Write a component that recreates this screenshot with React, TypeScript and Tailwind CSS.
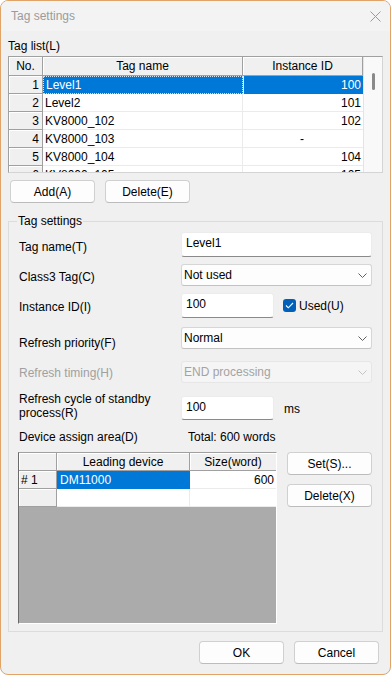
import React from "react";

const font = { fontFamily: '"Liberation Sans", Arial, sans-serif' };

function Btn({ children, className = "" }: { children: React.ReactNode; className?: string }) {
  return (
    <div
      className={
        "flex items-center justify-center h-[23px] w-[85px] bg-[#fdfdfd] border border-[#d0d0d0] border-b-[#bcbcbc] rounded-[4px] text-[12px] leading-[14px] text-black " +
        className
      }
    >
      {children}
    </div>
  );
}

function Chevron({ color = "#5f5f5f" }: { color?: string }) {
  return (
    <svg width="9" height="5" viewBox="0 0 9 5" className="shrink-0">
      <path d="M0.5 0.5 L4.5 4.5 L8.5 0.5" fill="none" stroke={color} strokeWidth="1" />
    </svg>
  );
}

function Select({ value, disabled = false }: { value: string; disabled?: boolean }) {
  return (
    <div
      className={
        "flex items-center justify-between h-[22px] w-[191px] pl-[2px] pr-[4px] rounded-[3px] border text-[12px] leading-[14px] " +
        (disabled
          ? "bg-[#f5f5f5] border-[#e6e6e6] text-[#a3a3a3]"
          : "bg-[#fdfdfd] border-[#d6d6d6] border-b-[#c2c2c2] text-black")
      }
    >
      <span>{value}</span>
      <Chevron color={disabled ? "#c4c4c4" : "#5f5f5f"} />
    </div>
  );
}

function Input({ value, w, h = 25 }: { value: string; w: string; h?: number }) {
  return (
    <div
      className={
        "flex items-start pl-[4px] pt-[3px] bg-white border border-[#ececec] border-b-[#8a8a8a] rounded-[3px] text-[12px] leading-[14px] text-black " +
        w +
        (h === 25 ? " h-[25px]" : " h-[24px]")
      }
    >
      {value}
    </div>
  );
}

const rows = [
  ["1", "Level1", "100"],
  ["2", "Level2", "101"],
  ["3", "KV8000_102", "102"],
  ["4", "KV8000_103", "-"],
  ["5", "KV8000_104", "104"],
  ["6", "KV8000_105", "105"],
];

export default function App() {
  return (
    <div className="w-[391px] h-[675px] bg-white" style={font}>
      <div className="w-[391px] h-[675px] flex flex-col bg-[#f0f0f0] border border-[#e0a468] rounded-[8px] overflow-hidden">
        {/* Title bar */}
        <div className="h-[30px] shrink-0 flex items-center justify-between bg-[#f3f3f3] pl-[10px] pr-[9px]">
          <span className="text-[12px] text-[#9b9b9b] leading-[14px]">Tag settings</span>
          <svg width="11" height="11" viewBox="0 0 11 11">
            <path d="M0.5 0.5 L10.5 10.5 M10.5 0.5 L0.5 10.5" stroke="#9a9a9a" strokeWidth="1" />
          </svg>
        </div>

        {/* Body */}
        <div className="flex flex-col px-[7px] text-[12px] leading-[14px] text-black">
          <div className="mt-[8px] h-[14px]">Tag list(L)</div>

          {/* Tag list table */}
          <div className="mt-[3px] h-[117px] w-[375px] flex border border-[#a0a0a0] border-r-[#d4d4d4] border-b-[#d4d4d4] bg-white overflow-hidden">
            <div className="w-[354px] flex flex-col">
              <div className="flex h-[19px] shrink-0">
                <div className="w-[34px] flex items-center justify-center bg-[#f0f0f0] border-r border-b border-[#a0a0a0] shadow-[inset_1px_1px_0_#ffffff]">
                  No.
                </div>
                <div className="w-[200px] flex items-center justify-center bg-[#f0f0f0] border-r border-b border-[#a0a0a0] shadow-[inset_1px_1px_0_#ffffff]">
                  Tag name
                </div>
                <div className="w-[120px] flex items-center justify-center bg-[#f0f0f0] border-r border-b border-[#a0a0a0] shadow-[inset_1px_1px_0_#ffffff]">
                  Instance ID
                </div>
              </div>
              {rows.map(([n, name, id], i) => {
                const sel = i === 0;
                return (
                  <div key={n} className="flex h-[18px] shrink-0">
                    <div className="w-[34px] flex items-center justify-end pr-[3px] bg-[#f0f0f0] border-r border-b border-[#a0a0a0] shadow-[inset_1px_1px_0_#ffffff]">
                      {n}
                    </div>
                    <div
                      className={
                        "w-[200px] flex items-center pl-[2px] " +
                        (sel
                          ? "bg-[#0078d7] text-white border border-dotted border-[#cfe3f7]"
                          : "border-r border-b border-[#ebebeb]")
                      }
                    >
                      {name}
                    </div>
                    <div
                      className={
                        "w-[120px] flex items-center pr-[2px] " +
                        (id === "-" ? "justify-center " : "justify-end ") +
                        (sel ? "bg-[#0078d7] text-white border-l border-[#e8f1fa]" : "border-b border-[#ebebeb]")
                      }
                    >
                      {id}
                    </div>
                  </div>
                );
              })}
            </div>
            <div className="flex-1 bg-[#f9f9f9] border-l border-[#e4e4e4]">
              <div className="mt-[16px] ml-[8px] w-[3px] h-[17px] rounded-full bg-[#8a8a8a]" />
            </div>
          </div>

          {/* Add / Delete */}
          <div className="mt-[7px] flex gap-[10px] pl-[2px]">
            <Btn>Add(A)</Btn>
            <Btn>Delete(E)</Btn>
          </div>

          {/* Group box */}
          <div className="relative mt-[18px] w-[375px] border border-[#dcdcdc] pt-[10px] pb-[7px] pl-[10px]">
            <div className="absolute -top-[8px] left-[8px] px-[1px] bg-[#f0f0f0] leading-[14px]">Tag settings</div>

            <div className="flex items-center h-[25px]">
              <div className="w-[162px] pt-[5px]">Tag name(T)</div>
              <Input value="Level1" w="w-[191px]" />
            </div>

            <div className="flex items-center h-[22px] mt-[7px]">
              <div className="w-[162px] pt-[4px]">Class3 Tag(C)</div>
              <Select value="Not used" />
            </div>

            <div className="flex items-center h-[25px] mt-[7px]">
              <div className="w-[162px] pt-[2px]">Instance ID(I)</div>
              <Input value="100" w="w-[93px]" />
              <div className="ml-[9px] w-[13px] h-[13px] rounded-[3px] bg-[#005fb8] flex items-center justify-center">
                <svg width="9" height="7" viewBox="0 0 9 7">
                  <path d="M1 3.5 L3.3 5.8 L8 1" fill="none" stroke="#ffffff" strokeWidth="1.1" />
                </svg>
              </div>
              <span className="ml-[3px]">Used(U)</span>
            </div>

            <div className="flex items-center h-[22px] mt-[9px]">
              <div className="w-[162px] pt-[10px]">Refresh priority(F)</div>
              <Select value="Normal" />
            </div>

            <div className="flex items-center h-[22px] mt-[12px]">
              <div className="w-[162px] pt-[1px] text-[#a0a0a0]">Refresh timing(H)</div>
              <Select value="END processing" disabled />
            </div>

            <div className="flex items-center h-[24px] mt-[13px]">
              <div className="w-[162px] pb-[4px]">
                Refresh cycle of standby
                <br />
                process(R)
              </div>
              <Input value="100" w="w-[93px]" h={24} />
              <span className="ml-[10px] pt-[1px]">ms</span>
            </div>

            <div className="flex h-[14px] mt-[10px]">
              <div className="w-[169px]">Device assign area(D)</div>
              <div>Total: 600 words</div>
            </div>

            <div className="flex mt-[8px] -ml-[1px]">
              <div className="w-[259px] h-[172px] flex flex-col bg-[#ababab] border border-t-[#a0a0a0] border-l-[#6b6b6b] border-r-white border-b-white overflow-hidden">
                <div className="flex h-[18px] shrink-0">
                  <div className="w-[38px] bg-[#f0f0f0] border-r border-b border-[#a0a0a0] shadow-[inset_1px_1px_0_#ffffff]" />
                  <div className="w-[133px] flex items-center justify-center bg-[#f0f0f0] border-r border-b border-[#a0a0a0] shadow-[inset_1px_1px_0_#ffffff]">
                    Leading device
                  </div>
                  <div className="w-[86px] flex items-center justify-center bg-[#f0f0f0] border-b border-[#a0a0a0] shadow-[inset_1px_1px_0_#ffffff]">
                    Size(word)
                  </div>
                </div>
                <div className="flex h-[18px] shrink-0">
                  <div className="w-[38px] flex items-center pl-[2px] bg-[#f0f0f0] border-r border-b border-[#a0a0a0] shadow-[inset_1px_1px_0_#ffffff]">
                    # 1
                  </div>
                  <div className="w-[133px] flex items-center pl-[3px] bg-[#0078d7] text-white border-b border-[#0078d7]">
                    DM11000
                  </div>
                  <div className="w-[86px] flex items-center justify-end pr-[2px] bg-white border-b border-[#ebebeb]">
                    600
                  </div>
                </div>
                <div className="flex h-[18px] shrink-0">
                  <div className="w-[38px] bg-[#f0f0f0] border-r border-b border-[#a0a0a0] shadow-[inset_1px_1px_0_#ffffff]" />
                  <div className="w-[133px] bg-white border-r border-b border-[#ebebeb]" />
                  <div className="w-[86px] bg-white border-b border-[#ebebeb]" />
                </div>
              </div>
              <div className="ml-[10px] flex flex-col">
                <Btn>Set(S)...</Btn>
                <Btn className="mt-[9px]">Delete(X)</Btn>
              </div>
            </div>
          </div>

          {/* Footer */}
          <div className="mt-[9px] flex justify-end gap-[10px] pr-[4px]">
            <Btn>OK</Btn>
            <Btn>Cancel</Btn>
          </div>
        </div>
      </div>
    </div>
  );
}
